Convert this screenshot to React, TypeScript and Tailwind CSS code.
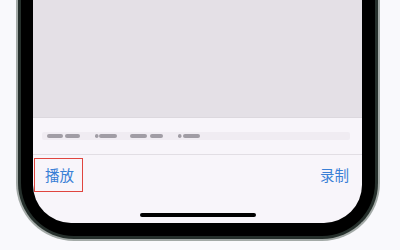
import React from "react";

export default function App() {
  return (
    <div
      className="w-[400px] h-[250px] overflow-hidden bg-[#f9f9fc]"
      style={{ fontFamily: '"Noto Sans CJK SC", "Noto Sans", sans-serif' }}
    >
      <div className="ml-[16px] w-[364px] h-[241px] rounded-b-[58px] border-x-2 border-b-2 border-t-0 border-[#a3aaa7] bg-[#26302c] px-[3px] pb-[3px]">
        <div className="h-full rounded-b-[53px] bg-black pl-[12px] pr-[13px] pb-[13px]">
          <div className="h-full rounded-b-[38px] overflow-hidden bg-[#f8f5fa] flex flex-col">
            <div className="h-[118px] shrink-0 bg-[#e4e0e6] border-b border-[#dcd8de]" />
            <div className="h-[36px] shrink-0 flex items-center">
              <div className="ml-[9px] w-[308px] h-[8px] rounded-[2px] bg-[#f0ecf2] relative">
                <svg width="308" height="8" viewBox="0 0 308 8" className="absolute left-0 top-0">
                  <g fill="#a19da5">
                    <rect x="5" y="2" width="16" height="4" rx="2" />
                    <rect x="23" y="2" width="15" height="4" rx="2" />
                    <rect x="53" y="2" width="3.5" height="4" rx="1.75" />
                    <rect x="57" y="2" width="18" height="4" rx="2" />
                    <rect x="88" y="2" width="17" height="4" rx="2" />
                    <rect x="108" y="2" width="13" height="4" rx="2" />
                    <rect x="136" y="2" width="3.5" height="4" rx="1.75" />
                    <rect x="141" y="2" width="17" height="4" rx="2" />
                  </g>
                </svg>
              </div>
            </div>
            <div className="h-px shrink-0 bg-[#e2dee4]" />
            <div className="flex items-start justify-between pt-[3px]">
              <div className="ml-[1px] w-[49px] h-[34px] border border-[#e0453e] flex items-center pl-[10px] text-[14.5px] text-[#3a80d6] leading-none">
                播放
              </div>
              <div className="mr-[13px] h-[34px] flex items-center text-[14.5px] text-[#3a80d6] leading-none">
                录制
              </div>
            </div>
            <div className="flex-1" />
            <div className="flex justify-center pb-[6px]">
              <div className="w-[116px] h-[4px] rounded-full bg-black" />
            </div>
          </div>
        </div>
      </div>
    </div>
  );
}
